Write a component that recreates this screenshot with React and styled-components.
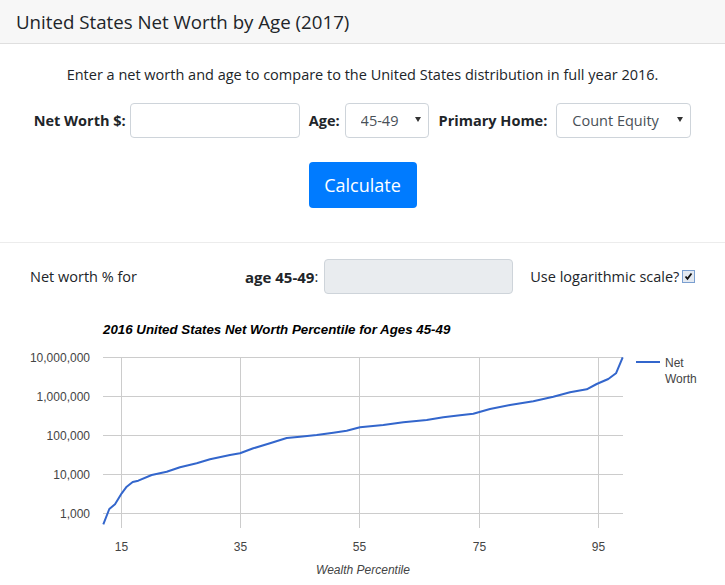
import styled, { createGlobalStyle } from "styled-components";

const GlobalStyle = createGlobalStyle`
  body {
    margin: 0;
    background: #fff;
    font-family: "Open Sans", "Noto Sans", sans-serif;
    color: #212529;
  }
`;

// chart trace in plot pixels (log scale, 39px per decade)
const trace = [
  [103.3, 214.3], [109.3, 199], [115, 194.3], [121.7, 183.3], [126.7, 176.7],
  [132.7, 172], [138.3, 170.7], [151.7, 165], [166.7, 161.7], [180, 157.3],
  [196.7, 153.3], [210, 149.3], [230, 145], [240, 143.3], [253.3, 138.3],
  [270, 133.3], [286.7, 128], [300, 126.7], [316.7, 125], [333.3, 122.7],
  [346.7, 120.7], [360, 117.3], [383.3, 115], [403.3, 112.3], [426.7, 110],
  [443.3, 107.3], [460, 105.3], [473.3, 103.7], [490, 99], [510, 95],
  [533.3, 91.3], [553.3, 86.7], [570, 82.3], [586.7, 79.3], [596.7, 74],
  [608.3, 69], [616, 63.3], [622.7, 47.3],
];

const yTicks = [
  { y: 47.5, label: "10,000,000" },
  { y: 86.5, label: "1,000,000" },
  { y: 125.5, label: "100,000" },
  { y: 164.5, label: "10,000" },
  { y: 203.5, label: "1,000" },
];

const xTicks = [
  { x: 121.5, label: "15" },
  { x: 240.5, label: "35" },
  { x: 359.5, label: "55" },
  { x: 479.5, label: "75" },
  { x: 598.5, label: "95" },
];

const Card = styled.div`
  width: 725px;
  height: 585px;
  overflow: hidden;
`;

const Header = styled.div`
  height: 43px;
  display: flex;
  align-items: center;
  padding: 0 16px;
  background: #f7f7f7;
  border-bottom: 1px solid #dfdfdf;
  font-size: 18.7px;
  color: #212529;
`;

const Body = styled.div`
  padding-top: 19px;
  display: flex;
  flex-direction: column;
  align-items: center;
`;

const Intro = styled.p`
  margin: 0;
  line-height: 24px;
  font-size: 14.5px;
  text-align: center;
`;

const FormRow = styled.div`
  margin-top: 16px;
  display: flex;
  align-items: center;
  justify-content: center;
`;

const Label = styled.label`
  font-weight: 700;
  font-size: 14.5px;
  margin-right: ${(p) => p.$gap || 4}px;
`;

const TextInput = styled.input`
  box-sizing: border-box;
  width: ${(p) => p.$w}px;
  height: 35px;
  border: 1px solid #ced4da;
  border-radius: 4px;
  background: ${(p) => (p.readOnly ? "#e9ecef" : "#fff")};
  margin-right: ${(p) => p.$mr || 0}px;
  outline: none;
`;

const SelectWrap = styled.div`
  position: relative;
  margin-right: ${(p) => p.$mr || 0}px;
`;

const Select = styled.select`
  appearance: none;
  box-sizing: border-box;
  width: ${(p) => p.$w}px;
  height: 35px;
  padding: 0 0 0 ${(p) => p.$pl}px;
  border: 1px solid #ced4da;
  border-radius: 4px;
  background: #fff;
  color: #495057;
  font-family: "Open Sans", sans-serif;
  font-size: 14.5px;
  outline: none;
`;

const Arrow = styled.span`
  position: absolute;
  right: 8px;
  top: 14px;
  width: 0;
  height: 0;
  border-left: 3px solid transparent;
  border-right: 3px solid transparent;
  border-top: 5px solid #333;
  pointer-events: none;
`;

const Button = styled.button`
  margin-top: 24px;
  width: 108px;
  height: 46px;
  border: none;
  border-radius: 4px;
  background: #007bff;
  color: #fff;
  font-family: "Open Sans", sans-serif;
  font-size: 18px;
`;

const Divider = styled.hr`
  margin: 34px 0 0;
  border: none;
  border-top: 1px solid #ececec;
`;

const ResultRow = styled.div`
  margin-top: 16px;
  height: 35px;
  display: flex;
  align-items: center;
  padding-left: 30px;
  font-size: 14.5px;
`;

const ResultLead = styled.span`
  width: 215px;
`;

const Bold = styled.b`
  font-weight: 700;
  font-size: 15px;
`;

const Colon = styled.span`
  margin-right: 6px;
`;

const CheckLabel = styled.label`
  margin-left: 17px;
  display: flex;
  align-items: center;
  gap: 3px;
`;

const CheckBox = styled.span`
  box-sizing: border-box;
  width: 13px;
  height: 13px;
  border: 1px solid #7a9fd0;
  background: #e3e9f1;
  display: flex;
  align-items: center;
  justify-content: center;
`;

const Chart = styled.svg`
  display: block;
  margin-top: 16px;
  font-family: "Liberation Sans", Arial, sans-serif;
`;

export default function App() {
  const path = trace.map(([x, y], i) => `${i ? "L" : "M"}${x},${y}`).join(" ");
  return (
    <>
      <GlobalStyle />
      <Card>
        <Header>United States Net Worth by Age (2017)</Header>
        <Body>
          <Intro>
            Enter a net worth and age to compare to the United States distribution in full year 2016.
          </Intro>
          <FormRow>
            <Label>Net Worth $:</Label>
            <TextInput $w={170} $mr={9} />
            <Label $gap={5}>Age:</Label>
            <SelectWrap $mr={10}>
              <Select $w={84} $pl={15} defaultValue="45-49">
                <option>45-49</option>
              </Select>
              <Arrow />
            </SelectWrap>
            <Label $gap={9}>Primary Home:</Label>
            <SelectWrap>
              <Select $w={135} $pl={15} defaultValue="Count Equity">
                <option>Count Equity</option>
              </Select>
              <Arrow />
            </SelectWrap>
          </FormRow>
          <Button>Calculate</Button>
        </Body>
        <Divider />
        <ResultRow>
          <ResultLead>Net worth % for</ResultLead>
          <Bold>age 45-49</Bold>
          <Colon>:</Colon>
          <TextInput $w={189} readOnly />
          <CheckLabel>
            Use logarithmic scale?
            <CheckBox>
              <svg width="9" height="9" viewBox="0 0 9 9">
                <path d="M1.5 4.5 L3.5 6.8 L7.5 1.5" fill="none" stroke="#111" strokeWidth="1.8" />
              </svg>
            </CheckBox>
          </CheckLabel>
        </ResultRow>
        <Chart width="725" height="275" viewBox="0 0 725 275">
          <text x="103" y="24" fontSize="13.3" fontWeight="bold" fontStyle="italic" fill="#000">
            2016 United States Net Worth Percentile for Ages 45-49
          </text>
          {yTicks.map((t) => (
            <g key={t.label}>
              <line x1="103" x2="623" y1={t.y} y2={t.y} stroke="#ccc" />
              <text x="90" y={t.y + 4} textAnchor="end" fontSize="12" fill="#444">
                {t.label}
              </text>
            </g>
          ))}
          {xTicks.map((t) => (
            <g key={t.label}>
              <line x1={t.x} x2={t.x} y1="47" y2="218" stroke="#ccc" />
              <text x={t.x} y="241" textAnchor="middle" fontSize="12" fill="#444">
                {t.label}
              </text>
            </g>
          ))}
          <path d={path} fill="none" stroke="#3366cc" strokeWidth="2" strokeLinejoin="round" />
          <line x1="636" x2="660" y1="52" y2="52" stroke="#3366cc" strokeWidth="2" />
          <text x="665" y="57" fontSize="12" fill="#444">Net</text>
          <text x="665" y="73" fontSize="12" fill="#444">Worth</text>
          <text x="363" y="264" textAnchor="middle" fontSize="12" fontStyle="italic" fill="#444">
            Wealth Percentile
          </text>
        </Chart>
      </Card>
    </>
  );
}
